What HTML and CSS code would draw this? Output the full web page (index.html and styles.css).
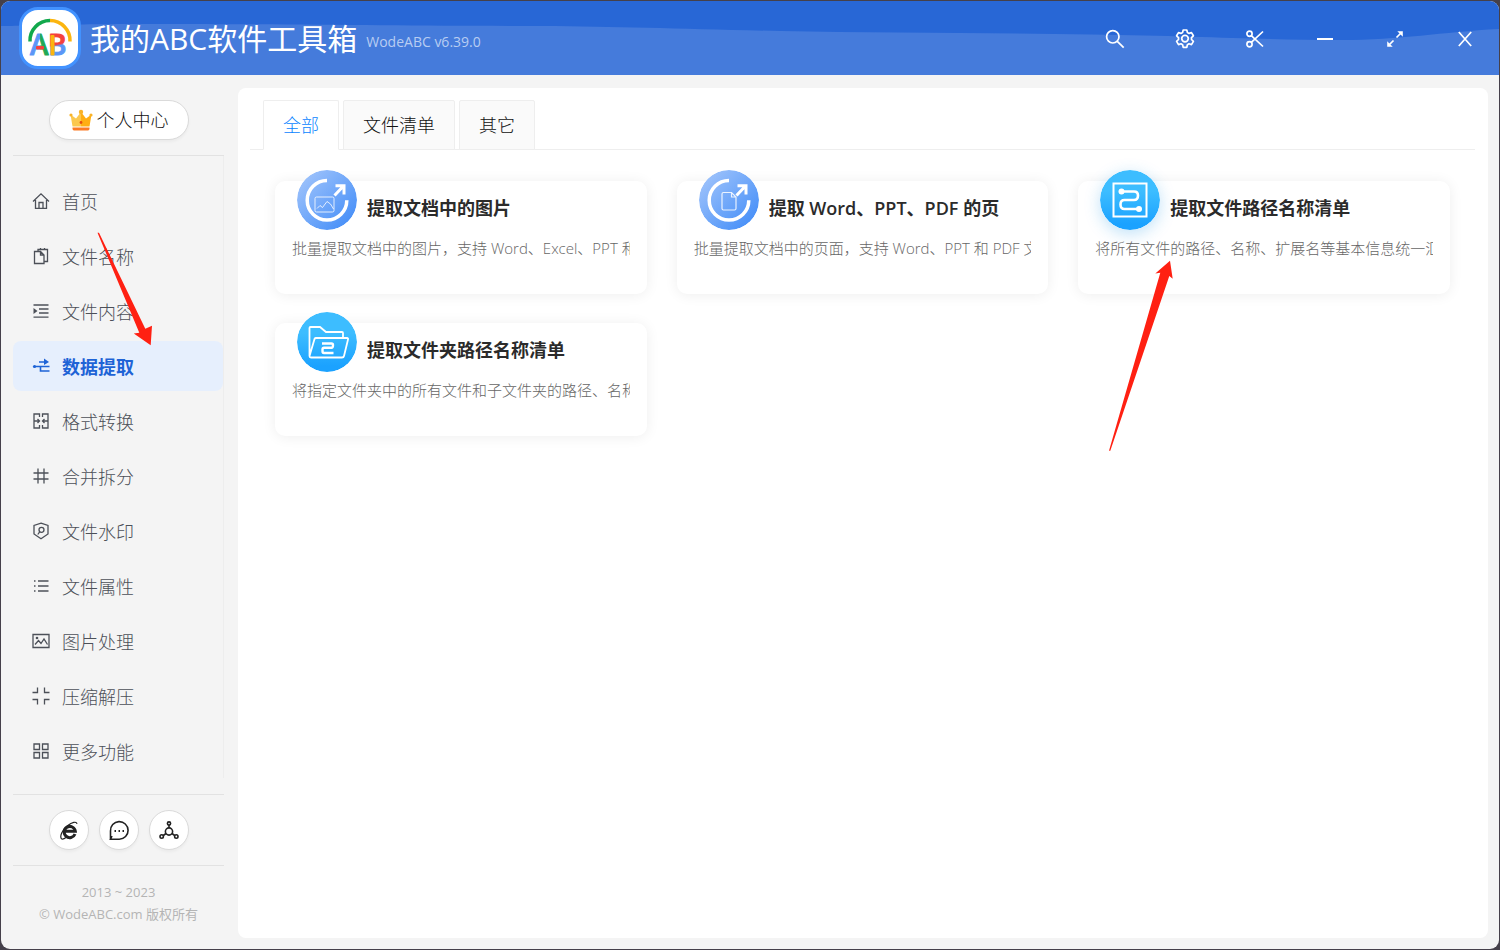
FILE: index.html
```html
<!DOCTYPE html>
<html lang="zh-CN">
<head>
<meta charset="utf-8">
<title>我的ABC软件工具箱</title>
<link rel="stylesheet" href="styles.css">
</head>
<body>
<div class="window">
  <header class="topbar">
    <svg class="wave" viewBox="0 0 1498 74" preserveAspectRatio="none" aria-hidden="true">
      <path d="M0 25 C30 25 50 23 150 23 C300 23 400 25 540 25 C620 25.500 680 28 780 30 C880 32 1000 32 1090 33.500 C1200 35 1260 39 1340 39 C1400 39 1440 31 1498 28 V74 H0Z"/>
    </svg>
    <div class="logo">
      <svg viewBox="0 0 56 56" aria-hidden="true">
        <defs>
          <linearGradient id="ga" x1="0" x2="1" y1="0" y2="0"><stop offset=".5" stop-color="#5b96f7"/><stop offset=".56" stop-color="#1fa855"/></linearGradient>
          <linearGradient id="gb" x1="0" x2="0.1" y1="0" y2="1"><stop offset=".55" stop-color="#f5403c"/><stop offset=".6" stop-color="#5b96f7"/></linearGradient>
        </defs>
        <path d="M8 31.500 A20 20 0 0 1 28 10.500" fill="none" stroke="#12a84c" stroke-width="3.500"/>
        <path d="M28 10.500 A20 20 0 0 1 48 31.500" fill="none" stroke="#fbb50f" stroke-width="3.500"/>
        <text class="logo-letter" x="8" y="45" fill="url(#ga)" stroke="url(#ga)">A</text>
        <text class="logo-letter" x="26" y="45" fill="url(#gb)" stroke="url(#gb)">B</text>
        <rect x="14" y="36" width="8" height="3.500" rx="1" fill="#f5403c"/>
        <rect x="28.500" y="25" width="4" height="20.500" rx="1" fill="#fbb50f"/>
      </svg>
    </div>
    <h1 class="app-name">我的ABC软件工具箱</h1>
    <span class="version">WodeABC v6.39.0</span>
    <div class="controls">
      <button type="button" aria-label="搜索"><svg viewBox="0 0 20 20"><circle cx="7.800" cy="7.800" r="6.200"/><path d="M12.300 12.300L18.700 18.700"/></svg></button>
      <button type="button" aria-label="设置"><svg viewBox="0 0 20 20"><path d="M8.200 1h3.600l.6 2.500 1.600.9 2.500-.8 1.900 3.200-1.900 1.800v1.900l1.900 1.900-1.900 3.200-2.500-.8-1.600.9-.6 2.600H8.200l-.6-2.600-1.600-.9-2.500.8-1.900-3.200 1.900-1.900V8.600L1.600 6.800l1.900-3.200 2.500.8 1.600-.9z" stroke-linejoin="round"/><circle cx="10" cy="9.600" r="3.300"/></svg></button>
      <button type="button" aria-label="截图"><svg viewBox="0 0 20 20"><circle cx="4.500" cy="4.800" r="2.600"/><circle cx="4.500" cy="15.200" r="2.600"/><path d="M6.300 6.600L18 17.500M6.300 13.400L18 2.500"/></svg></button>
      <button type="button" aria-label="最小化"><svg viewBox="0 0 20 20"><path d="M2 10H18" stroke-width="2"/></svg></button>
      <button type="button" aria-label="最大化"><svg viewBox="0 0 20 20"><path d="M11.500 8.500L16 4M8.500 11.500L4 16"/><path class="solid" d="M12.300 2.200H17.800V7.700ZM2.200 12.300V17.800H7.700Z"/></svg></button>
      <button type="button" aria-label="关闭"><svg viewBox="0 0 20 20"><path d="M3.800 3L16.200 17M16.200 3L3.800 17"/></svg></button>
    </div>
  </header>

  <div class="body">
    <aside class="sidebar">
      <div class="account">
        <button type="button" class="account-btn">
          <svg viewBox="0 0 24 22" aria-hidden="true">
            <defs><linearGradient id="gc" x1="0" x2="1"><stop offset=".5" stop-color="#fbc84e"/><stop offset=".5" stop-color="#ffae13"/></linearGradient></defs>
            <path d="M1.500 5.500L7 9.500 12 3 17 9.500 22.500 5.500 20.500 17.500H3.500Z" fill="url(#gc)"/>
            <circle cx="2" cy="6" r="1.600" fill="#f9b328"/><circle cx="12" cy="3" r="2.200" fill="#f9b328"/><circle cx="22" cy="6" r="1.600" fill="#f9b328"/>
            <path d="M3.500 18.500H20.500V19.500Q20.500 21.500 19 21.500H5Q3.500 21.500 3.500 19.500Z" fill="#fb7a25"/>
            <circle cx="12" cy="13.500" r="1.400" fill="#e64d12"/>
          </svg>
          个人中心
        </button>
      </div>
      <nav class="nav">
        <a href="#"><svg viewBox="0 0 18 18"><path d="M1 9.500L9 1.800 17 9.500M3.500 8V16.300H14.500V8M7 16V10.500H11V16"/></svg>首页</a>
        <a href="#"><svg viewBox="0 0 18 18"><path d="M2.500 4.500H8.500L12 8V16.500H2.500ZM8.500 4.500V8H12M6 4.500V2.500H15.500V14.500H12M8.500 1V3M12.500 1V3"/></svg>文件名称</a>
        <a href="#"><svg viewBox="0 0 18 18"><path d="M1.500 3H16.500M7 7H16.500M7 11H16.500M1.500 15.200H16.500"/><path class="solid" d="M1.500 6L5.500 9 1.500 12Z"/></svg>文件内容</a>
        <a href="#" class="active" aria-current="page"><svg viewBox="0 0 18 18"><path d="M2 9.500H17.500M7 5H15M8.500 9.500V14H17.500" stroke-width="1.600"/><path class="solid" d="M12 1.500L17 5 12 8Z"/><circle class="solid" cx="2.500" cy="9.500" r="1.600"/></svg>数据提取</a>
        <a href="#"><svg viewBox="0 0 18 18"><path d="M7.500 5V2H2V16H7.500V13M10.500 5V2H16V16H10.500V13M2 9H7.500M16 9H10.500M5.500 7L7.500 9 5.500 11M12.500 7L10.500 9 12.500 11"/></svg>格式转换</a>
        <a href="#"><svg viewBox="0 0 18 18"><path d="M6 1.500V16.500M12 1.500V16.500M1.500 6H16.500M1.500 12H16.500"/></svg>合并拆分</a>
        <a href="#"><svg viewBox="0 0 18 18"><path d="M9 1.200L16 3.500V12L9 16.800 2 12V3.500Z"/><circle cx="9.500" cy="7.800" r="2.500"/><path d="M7.800 9.600L5.800 12.500"/></svg>文件水印</a>
        <a href="#"><svg viewBox="0 0 18 18"><path d="M2 4H3.500M2 9H3.500M2 14H3.500M6 4H16.500M6 9H16.500M6 14H16.500"/></svg>文件属性</a>
        <a href="#"><svg viewBox="0 0 18 18"><path d="M1 2.500H17V15.500H1ZM3 12.500L6.500 8.500 9 11.500 12 7 15.500 12.500"/><circle class="solid" cx="5" cy="6" r="1.300"/></svg>图片处理</a>
        <a href="#"><svg viewBox="0 0 18 18"><path d="M5.500 .5V5.500H.5M12.500 .5V5.500H17.500M.5 12.500H5.500V17.500M17.500 12.500H12.500V17.500"/></svg>压缩解压</a>
        <a href="#"><svg viewBox="0 0 18 18"><path d="M2 2H7.500V7.500H2ZM10.500 2H16V7.500H10.500ZM2 10.500H7.500V16H2ZM10.500 10.500H16V16H10.500Z"/></svg>更多功能</a>
      </nav>
      <div class="shortcuts">
        <button type="button" aria-label="官网"><svg viewBox="0 0 20 20"><path d="M16 14A5.600 5.600 0 1 1 16.300 11.200H6.500" stroke-width="3"/><path d="M2.500 18.800C.5 16.300 3 10.300 8.500 5.800 13 2.100 17.500 1.100 18 3.800M2.500 18.800Q4 19.800 7 17.600" stroke-width="1.200"/></svg></button>
        <button type="button" aria-label="反馈"><svg viewBox="0 0 20 20"><path d="M1.500 19.200V11A8.800 8.800 0 1 1 10.300 19.200H1.500L3 16"/><path d="M5.500 11H7M9.500 11H11M13.500 11H15" stroke-width="1.800"/></svg></button>
        <button type="button" aria-label="分享"><svg viewBox="0 0 20 20"><circle cx="10" cy="11.500" r="3.600"/><circle cx="10" cy="3.500" r="1.600"/><circle cx="2.700" cy="16.500" r="1.700"/><circle cx="17.300" cy="16.500" r="1.700"/><path d="M10 5V8M7 13.500L4.300 15.500M13 13.500L15.700 15.500"/></svg></button>
      </div>
      <footer class="copyright">
        <p>2013 ~ 2023</p>
        <p>© WodeABC.com 版权所有</p>
      </footer>
    </aside>

    <main class="panel">
      <div class="tabs" role="tablist">
        <button type="button" role="tab" aria-selected="true">全部</button>
        <button type="button" role="tab" aria-selected="false">文件清单</button>
        <button type="button" role="tab" aria-selected="false">其它</button>
      </div>
      <div class="cards">
        <a href="#" class="card">
          <div class="card-head">
            <svg class="badge" viewBox="0 0 60 60" aria-hidden="true">
              <defs><linearGradient id="gd" x1=".1" y1=".1" x2=".9" y2=".9"><stop offset="0" stop-color="#9dc2fb"/><stop offset="1" stop-color="#468ff8"/></linearGradient></defs>
              <circle cx="30" cy="30" r="30" fill="url(#gd)"/>
              <path d="M30 10.500A19.800 19.800 0 1 0 49.800 30.300" stroke-width="3.500"/>
              <path d="M37.500 25.500L46.500 16M38.500 15.700H47V24.500" stroke-width="3"/>
              <rect x="18" y="27" width="19" height="15" rx="1.500" stroke-width="1" opacity=".8"/>
              <path d="M20 38.500L23 35.500 25.500 37.500 30 31.500 33.500 34 36.500 39" stroke-width="1" opacity=".8"/>
            </svg>
            <h2>提取文档中的图片</h2>
          </div>
          <p>批量提取文档中的图片，支持 Word、Excel、PPT 和</p>
        </a>
        <a href="#" class="card">
          <div class="card-head">
            <svg class="badge" viewBox="0 0 60 60" aria-hidden="true">
              <circle cx="30" cy="30" r="30" fill="url(#gd)"/>
              <path d="M30 10.500A19.800 19.800 0 1 0 49.800 30.300" stroke-width="3.500"/>
              <path d="M37.500 25.500L46.500 16M38.500 15.700H47V24.500" stroke-width="3"/>
              <path d="M24.500 22.500H32.500L37 27V38.500Q37 40 35.500 40H24.500Q23 40 23 38.500V24Q23 22.500 24.500 22.500ZM32.500 22.500V27H37" stroke-width="1.200" opacity=".85"/>
            </svg>
            <h2>提取 Word、PPT、PDF 的页</h2>
          </div>
          <p>批量提取文档中的页面，支持 Word、PPT 和 PDF 文</p>
        </a>
        <a href="#" class="card">
          <div class="card-head">
            <svg class="badge glow" viewBox="0 0 60 60" aria-hidden="true">
              <defs><linearGradient id="ge" x1="0" y1="0" x2="0" y2="1"><stop offset=".35" stop-color="#3dbdff"/><stop offset=".9" stop-color="#1ba2ff"/></linearGradient></defs>
              <circle cx="30" cy="30" r="30" fill="url(#ge)"/>
              <rect x="13.500" y="13.500" width="33" height="33" stroke-width="2"/>
              <path d="M22 21.500H34Q38 21.500 38 25.500 38 30 34 30H24.500Q20.500 30 20.500 34.500 20.500 39 24.500 39H38" stroke-width="2.600"/>
              <circle cx="21.500" cy="21.500" r="3" fill="#fff" stroke="none"/><circle cx="39" cy="39" r="3" fill="#fff" stroke="none"/>
            </svg>
            <h2>提取文件路径名称清单</h2>
          </div>
          <p>将所有文件的路径、名称、扩展名等基本信息统一汇</p>
        </a>
        <a href="#" class="card">
          <div class="card-head">
            <svg class="badge" viewBox="0 0 60 60" aria-hidden="true">
              <circle cx="30" cy="30" r="30" fill="url(#ge)"/>
              <path d="M12.500 44V16Q12.500 15 13.500 15H23L29 20H45Q46 20 46 21V26M12.500 44L17.500 27Q18 26 19 26H50Q51.500 26 51 27.500L47 44Q46.700 45.500 45 45.500H14Q12.500 45.500 12.500 44Z" stroke-width="1.800"/>
              <path d="M25 31.500H34.500Q36 31.500 36 33 36 35.800 34.500 35.800H27Q25.500 35.800 25.500 37.500V39Q25.500 41 27 41H36.500" stroke-width="2.400"/>
            </svg>
            <h2>提取文件夹路径名称清单</h2>
          </div>
          <p>将指定文件夹中的所有文件和子文件夹的路径、名称</p>
        </a>
      </div>
    </main>
  </div>
  <svg class="pointer pointer-nav" viewBox="0 0 56 114" aria-hidden="true"><path d="M.5 .8L2 .7 48.300 96.700 55 93.700 53.700 113.300 36.800 101.600 42.300 100.700Z"/></svg>
  <svg class="pointer pointer-card" viewBox="0 0 66 192" aria-hidden="true"><path d="M1 190.700L52.300 12.700 47.300 13.500 62 .7 64.700 18.700 61.300 16 2.300 190.700Z"/></svg>
</div>
</body>
</html>
```
FILE: styles.css
```css
* { box-sizing: border-box; }

body {
  margin: 0;
  padding: 1px;
  min-height: 100vh;
  display: flex;
  background: #45404a;
  font-family: "Open Sans", "Noto Sans CJK SC", sans-serif;
  font-weight: 300;
  color: #111;
}

h1, h2, p { margin: 0; }
a { color: inherit; text-decoration: none; }
button { font: inherit; color: inherit; cursor: pointer; }

.window {
  position: relative;
  flex: 1;
  min-width: 0;
  display: flex;
  flex-direction: column;
  overflow: hidden;
  border-radius: 9px;
  background: #f4f4f4;
}

.topbar {
  position: relative;
  display: flex;
  align-items: center;
  height: 74px;
  padding: 0 14px 0 18px;
  background: #2867d6;
  color: #fff;
}
.topbar > * { position: relative; }
.topbar > .wave {
  position: absolute;
  inset: 0;
  width: 100%;
  height: 100%;
  fill: #457bdb;
}

.logo {
  width: 62px;
  height: 62px;
  border: 3px solid #4292ff;
  border-radius: 19px;
  background: #fff;
}
.logo svg { display: block; width: 100%; height: 100%; }
.logo-letter {
  font: 600 28px "Open Sans", sans-serif;
  stroke-width: 1;
  stroke-linejoin: round;
}

.app-name {
  margin-left: 9px;
  padding-top: 2px;
  font-size: 30px;
  font-weight: 400;
  line-height: 40px;
  white-space: nowrap;
}
.version {
  margin: 6px 0 0 9px;
  font-size: 14px;
  font-weight: 400;
  color: #b8cdf2;
  white-space: nowrap;
}

.controls { display: flex; gap: 30px; margin-left: auto; padding-top: 2px; }
.controls button {
  display: grid;
  place-items: center;
  width: 40px;
  height: 40px;
  padding: 0;
  border: 0;
  background: none;
}
.controls svg { width: 20px; height: 20px; fill: none; stroke: #fff; stroke-width: 1.7; }
.controls .solid { fill: #fff; stroke: none; }

.body {
  flex: 1;
  display: flex;
  gap: 14px;
  padding: 13px 11px 11px 12px;
}

.sidebar {
  flex: none;
  width: 211px;
  display: flex;
  flex-direction: column;
}
.account {
  padding: 12px 0 15px;
  text-align: center;
  border-bottom: 1px solid #e2e2e2;
}
.account-btn {
  display: inline-flex;
  align-items: center;
  justify-content: center;
  gap: 4px;
  width: 140px;
  height: 40px;
  padding: 0;
  border: 1px solid #dadada;
  border-radius: 20px;
  background: #fff;
  box-shadow: 0 2px 3px rgba(0, 0, 0, .04);
  font-size: 18px;
  line-height: 36px;
  vertical-align: top;
}
.account-btn svg { width: 24px; height: 22px; }

.nav {
  flex: 1;
  display: flex;
  flex-direction: column;
  gap: 5px;
  margin-bottom: 16px;
  padding-top: 20px;
  border-right: 1px solid #ededed;
}
.nav a {
  display: flex;
  align-items: center;
  gap: 12px;
  height: 50px;
  padding-left: 19px;
  border-radius: 8px;
  font-size: 18px;
  color: #4c5058;
}
.nav a.active {
  background: #e6effd;
  color: #1e63d6;
  font-weight: 700;
}
.nav svg { width: 18px; height: 18px; fill: none; stroke: currentColor; stroke-width: 1.3; }
.nav .solid { fill: currentColor; stroke: none; }

.shortcuts {
  display: flex;
  justify-content: center;
  gap: 10px;
  padding: 15px 0;
  border-top: 1px solid #e2e2e2;
  border-bottom: 1px solid #e2e2e2;
}
.shortcuts button {
  display: grid;
  place-items: center;
  width: 40px;
  height: 40px;
  padding: 0;
  border: 1px solid #dadada;
  border-radius: 50%;
  background: #fff;
  box-shadow: 0 2px 3px rgba(0, 0, 0, .04);
}
.shortcuts svg { width: 20px; height: 20px; fill: none; stroke: #222; stroke-width: 1.6; overflow: visible; }

.copyright {
  padding: 15px 0 13px;
  font-size: 13px;
  font-weight: 400;
  line-height: 22px;
  text-align: center;
  color: #b4b4b4;
}

.panel {
  flex: 1;
  min-width: 0;
  padding: 12px 13px 12px 12px;
  border-radius: 8px;
  background: #fff;
}

.tabs {
  display: flex;
  gap: 4px;
  padding-left: 13px;
  border-bottom: 1px solid #eee;
}
.tabs button {
  height: 50px;
  margin-bottom: -1px;
  padding: 0 19px 2px;
  border: 1px solid #eee;
  border-radius: 2px 2px 0 0;
  background: #fafafa;
  font-size: 18px;
}
.tabs button[aria-selected="true"] {
  border-bottom-color: #fff;
  background: #fff;
  color: #0a84ff;
}

.cards {
  display: grid;
  grid-template-columns: repeat(3, minmax(0, 1fr));
  gap: 29px 30px;
  padding: 31px 25px;
}
.card {
  padding: 0 17px 35px;
  border-radius: 10px;
  background: #fff;
  box-shadow: 0 1px 14px rgba(0, 0, 0, .07);
}
.card-head {
  display: flex;
  align-items: center;
  gap: 10px;
  margin-top: -11px;
  padding-left: 5px;
}
.badge {
  flex: none;
  width: 60px;
  height: 60px;
  border-radius: 50%;
  fill: none;
  stroke: #fff;
}
.badge > circle:first-of-type { stroke: none; }
.glow { box-shadow: 0 4px 16px rgba(30, 150, 230, .28); }
.card h2 {
  padding-top: 15px;
  overflow: hidden;
  font-size: 18px;
  font-weight: 600;
  line-height: 26px;
  white-space: nowrap;
  color: #2b2b2b;
}
.card p {
  margin-top: 7px;
  overflow: hidden;
  font-size: 15px;
  line-height: 22px;
  white-space: nowrap;
  color: #666;
}

.pointer { position: absolute; fill: #ff2012; pointer-events: none; }
.pointer-nav { left: 96px; top: 231px; width: 56px; height: 114px; }
.pointer-card { left: 1107px; top: 259px; width: 66px; height: 192px; }
```
